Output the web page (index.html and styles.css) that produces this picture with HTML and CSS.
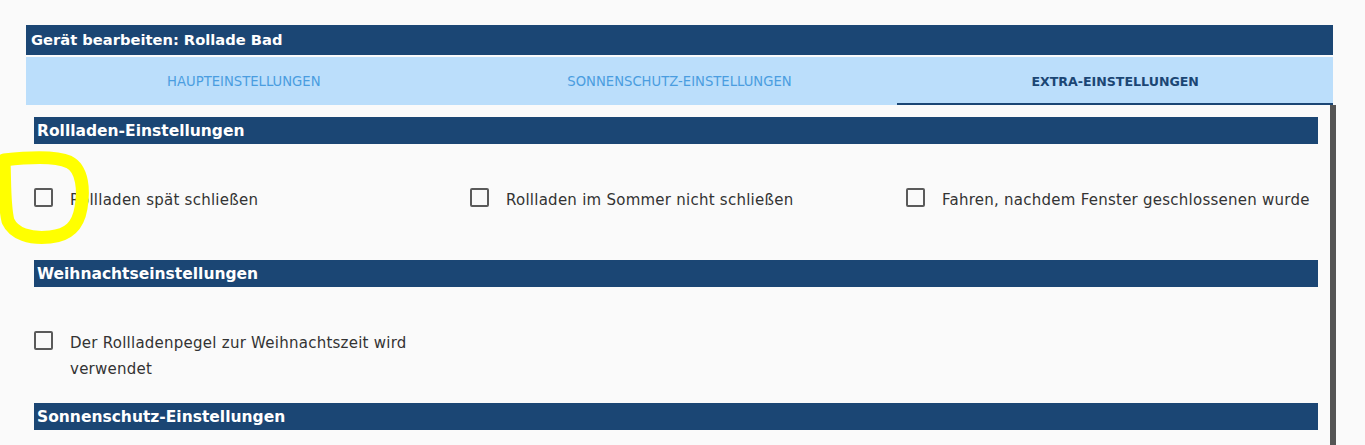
FILE: index.html
```html
<!DOCTYPE html>
<html lang="de">
<head>
  <meta charset="UTF-8" />
  <meta name="viewport" content="width=device-width, initial-scale=1.0" />
  <title>Gerät bearbeiten</title>
  <link rel="stylesheet" href="styles.css">
</head>
<body>
  <div class="dialog">
    <div class="title">Gerät bearbeiten: Rollade Bad</div>

    <div class="tabs">
      <div class="tab">HAUPTEINSTELLUNGEN</div>
      <div class="tab">SONNENSCHUTZ-EINSTELLUNGEN</div>
      <div class="tab active">EXTRA-EINSTELLUNGEN</div>
    </div>

    <div class="panel">
      <h2 class="section">Rollladen-Einstellungen</h2>
      <div class="options">
        <label class="option">
          <input type="checkbox" />
          <span class="box"></span>
          <span class="text">Rollladen spät schließen</span>
        </label>
        <label class="option">
          <input type="checkbox" />
          <span class="box"></span>
          <span class="text">Rollladen im Sommer nicht schließen</span>
        </label>
        <label class="option">
          <input type="checkbox" />
          <span class="box"></span>
          <span class="text">Fahren, nachdem Fenster geschlossenen wurde</span>
        </label>
      </div>

      <h2 class="section">Weihnachtseinstellungen</h2>
      <div class="options">
        <label class="option">
          <input type="checkbox" />
          <span class="box"></span>
          <span class="text">Der Rollladenpegel zur Weihnachtszeit wird verwendet</span>
        </label>
      </div>

      <h2 class="section">Sonnenschutz-Einstellungen</h2>
    </div>
  </div>

  <!-- yellow marker drawn over the first checkbox -->
  <svg class="marker" width="110" height="110" viewBox="0 0 110 110">
    <path d="M4 15 C30 12 56 11 69 17 C83 24 84 46 81 63 C78 81 69 90 50 92 C30 94 14 89 8 76 C4 60 5 40 4 15 Z"
          fill="none" stroke="#ffff00" stroke-width="13" stroke-linejoin="round" />
  </svg>
</body>
</html>
```

FILE: styles.css
```css
body {
  margin: 0;
  background: #fafafa;
  font-family: "DejaVu Sans", Verdana, sans-serif;
  color: #333;
  overflow: hidden;
}
.dialog {
  margin: 25px 0 0 26px;
  width: 1307px;
}
.title {
  height: 30px;
  line-height: 30px;
  padding-left: 5px;
  background: #1b4674;
  color: #fff;
  font-size: 14.7px;
  font-weight: 600;
}
.tabs {
  margin-top: 2px;
  height: 48px;
  display: grid;
  grid-template-columns: repeat(3, 1fr);
  background: #bbdefb;
}
.tab {
  display: flex;
  align-items: center;
  justify-content: center;
  font-size: 13.2px;
  color: #4a9de0;
}
.tab.active {
  color: #1b4674;
  font-size: 12.6px;
  font-weight: 600;
  box-shadow: inset 0 -2px 0 #1b4674;
}
.panel {
  width: 1304px;
  height: 328px;
  padding-top: 12px;
  border-right: 6px solid #555;
}
.section {
  margin: 0 12px 0 8px;
  height: 27px;
  line-height: 28px;
  padding-left: 3px;
  background: #1b4674;
  color: #fff;
  font-size: 15.5px;
  font-weight: 600;
}
.options {
  display: grid;
  grid-template-columns: repeat(3, 436px);
  padding: 41px 0 21px;
}
.option {
  position: relative;
  display: flex;
  align-items: flex-start;
  min-height: 54px;
  padding: 0 8px;
  cursor: pointer;
}
.option input {
  position: absolute;
  opacity: 0;
}
.box {
  flex: none;
  width: 15px;
  height: 15px;
  margin: 3px 17px 0 0;
  border: 2px solid #5a5a5a;
  border-radius: 2px;
}
.text {
  padding-top: 2px;
  font-size: 15px;
  letter-spacing: 0.25px;
  line-height: 26px;
  max-width: 384px;
}
.marker {
  position: absolute;
  left: 0;
  top: 145px;
  pointer-events: none;
}
```
